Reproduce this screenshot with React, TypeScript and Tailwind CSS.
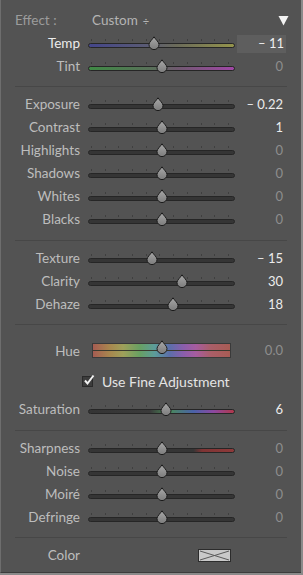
const TRACKS: Record<string, string> = {
  gray: "bg-[#353535]",
  temp: "bg-[linear-gradient(to_right,#44468a,#5a5b74_40%,#6b6b5a_60%,#94944c)]",
  tint: "bg-[linear-gradient(to_right,#3f8a45,#5a6e5a_45%,#6e5a6e_60%,#a047a6)]",
  sat: "bg-[linear-gradient(to_right,#353535,#3a3a3a_42%,#4a8a58_55%,#4a62a8_72%,#8c48a0_86%,#b0384a)]",
  sharp: "bg-[linear-gradient(to_right,#353535,#353535_72%,#7e3434_78%,#8e3a3a)]",
};

type Row = {
  label: string;
  value: string;
  pos: number;
  track?: string;
  bright?: boolean;
  boxed?: boolean;
  active?: boolean;
};

const Thumb = ({ left }: { left: number }) => (
  <svg
    width="12"
    height="14"
    viewBox="0 0 12 14"
    className="absolute top-[4px]"
    style={{ left: left - 6 }}
  >
    <defs>
      <linearGradient id="tg" x1="0" y1="0" x2="0" y2="1">
        <stop offset="0" stopColor="#a8a8a8" />
        <stop offset="1" stopColor="#7c7c7c" />
      </linearGradient>
    </defs>
    <path
      d="M6 0.8 C7.6 3.6 11 6 11 8.6 A5 5 0 0 1 1 8.6 C1 6 4.4 3.6 6 0.8 Z"
      fill="url(#tg)"
      stroke="#1c1c1c"
      strokeWidth="1"
    />
  </svg>
);

const Slider = ({ pos, track = "gray" }: { pos: number; track?: string }) => (
  <div className="relative w-[147px] h-[23px]">
    <div className="absolute left-[3px] right-[6px] top-[7px] flex justify-between">
      {Array.from({ length: 11 }).map((_, i) => (
        <div key={i} className="w-px h-[2px] bg-[#3f3f3f]" />
      ))}
    </div>
    <div
      className={`absolute left-0 right-0 top-[11px] h-[5px] rounded-full border border-[#262626] ${TRACKS[track]}`}
    />
    <Thumb left={pos} />
  </div>
);

const SliderRow = ({ row }: { row: Row }) => (
  <div className="flex items-center h-[23px]">
    <div
      className={`w-[79px] text-right text-[13.5px] leading-none ${
        row.active ? "text-[#ececec]" : "text-[#bdbdbd]"
      }`}
    >
      {row.label}
    </div>
    <div className="ml-[8px]">
      <Slider pos={row.pos} track={row.track} />
    </div>
    {row.boxed ? (
      <div className="ml-[2px] w-[49px] h-[18px] bg-[#5e5e5e] flex items-center justify-end pr-[2px] text-[13px] text-[#f0f0f0]">
        – 11
      </div>
    ) : (
      <div
        className={`flex-1 text-right pr-[18px] text-[13px] ${
          row.bright ? "text-[#ececec]" : "text-[#8e8e8e]"
        }`}
      >
        {row.value}
      </div>
    )}
  </div>
);

const Divider = ({ mt }: { mt: string }) => (
  <div className={`${mt} mx-[14px] h-px bg-[#474747]`} />
);

const wb: Row[] = [
  { label: "Temp", value: "– 11", pos: 66, track: "temp", boxed: true, active: true },
  { label: "Tint", value: "0", pos: 74, track: "tint" },
];

const tone: Row[] = [
  { label: "Exposure", value: "– 0.22", pos: 70, bright: true },
  { label: "Contrast", value: "1", pos: 74, bright: true },
  { label: "Highlights", value: "0", pos: 74 },
  { label: "Shadows", value: "0", pos: 74 },
  { label: "Whites", value: "0", pos: 74 },
  { label: "Blacks", value: "0", pos: 74 },
];

const presence: Row[] = [
  { label: "Texture", value: "– 15", pos: 64, bright: true },
  { label: "Clarity", value: "30", pos: 94, bright: true },
  { label: "Dehaze", value: "18", pos: 85, bright: true },
];

const detail: Row[] = [
  { label: "Sharpness", value: "0", pos: 74, track: "sharp" },
  { label: "Noise", value: "0", pos: 74 },
  { label: "Moiré", value: "0", pos: 74 },
  { label: "Defringe", value: "0", pos: 74 },
];

export default function App() {
  return (
    <div
      className="w-[303px] h-[575px] bg-[#8a8a8a] pr-[2px] pb-[2px]"
      style={{ fontFamily: "Lato, 'Liberation Sans', sans-serif" }}
    >
      <div className="h-full bg-[#535353] border-l border-l-[#6e6e6e] border-b border-b-[#3c3c3c] pt-[8px]">
        {/* header */}
        <div className="flex items-center h-[24px] pl-[14px] pr-[10px]">
          <span className="text-[13.5px] text-[#9c9c9c] w-[77px]">Effect :</span>
          <span className="text-[13.5px] text-[#b4b4b4]">Custom</span>
          <span className="ml-[5px] text-[11px] text-[#b4b4b4] leading-none">÷</span>
          <svg width="11" height="11" viewBox="0 0 11 11" className="ml-auto mr-[2px]">
            <path d="M0.5 1 L10.5 1 L5.5 10.5 Z" fill="#f2f2f2" />
          </svg>
        </div>

        {wb.map((r) => (
          <SliderRow key={r.label} row={r} />
        ))}

        <Divider mt="mt-[8px]" />
        <div className="mt-[6px]">
          {tone.map((r) => (
            <SliderRow key={r.label} row={r} />
          ))}
        </div>

        <Divider mt="mt-[9px]" />
        <div className="mt-[6px]">
          {presence.map((r) => (
            <SliderRow key={r.label} row={r} />
          ))}
        </div>

        <Divider mt="mt-[8px]" />
        {/* hue */}
        <div className="mt-[11px] flex items-center h-[30px]">
          <div className="w-[79px] text-right text-[13.5px] text-[#bdbdbd]">Hue</div>
          <div className="relative ml-[12px] w-[139px] h-[30px]">
            <div className="absolute left-0 right-0 top-[7px] h-[15px] border border-[#3a3a3a] bg-[linear-gradient(to_right,#a65c52,#a8864e_12%,#9ea05a_22%,#68a062_34%,#5c9c9a_45%,#5c6eaa_56%,#8a5eac_66%,#a65ca0_75%,#aa5e68_86%,#a85c54)] flex items-center">
              <div className="w-full h-px bg-[#3a3a2e]" />
            </div>
            <Thumb left={70} />
          </div>
          <div className="flex-1 text-right pr-[18px] text-[13px] text-[#8e8e8e]">0.0</div>
        </div>
        {/* fine adjustment */}
        <div className="flex items-center h-[30px] pl-[81px]">
          <div className="relative w-[11px] h-[11px] bg-[#3c3c3c] border border-[#2a2a2a]">
            <svg width="12" height="12" viewBox="0 0 12 12" className="absolute -top-[3px] left-[0px]">
              <path d="M2 6.5 L4.5 9.5 L10.5 1.5" fill="none" stroke="#f2f2f2" strokeWidth="2" />
            </svg>
          </div>
          <span className="ml-[9px] text-[14px] text-[#e4e4e4]">Use Fine Adjustment</span>
        </div>
        <div className="mt-[2px]">
          <SliderRow row={{ label: "Saturation", value: "6", pos: 78, track: "sat", bright: true }} />
        </div>

        <Divider mt="mt-[9px]" />
        <div className="mt-[6px]">
          {detail.map((r) => (
            <SliderRow key={r.label} row={r} />
          ))}
        </div>

        <Divider mt="mt-[8px]" />
        <div className="mt-[6px] flex items-center h-[23px]">
          <div className="w-[79px] text-right text-[13.5px] text-[#bdbdbd]">Color</div>
          <svg width="33" height="13" viewBox="0 0 33 13" className="ml-[118px]">
            <rect x="0.5" y="0.5" width="32" height="12" fill="#c9c9c9" stroke="#2c2c2c" />
            <path d="M2 2 L31 11 M2 11 L31 2" stroke="#5a5a5a" strokeWidth="1" />
          </svg>
        </div>
      </div>
    </div>
  );
}
